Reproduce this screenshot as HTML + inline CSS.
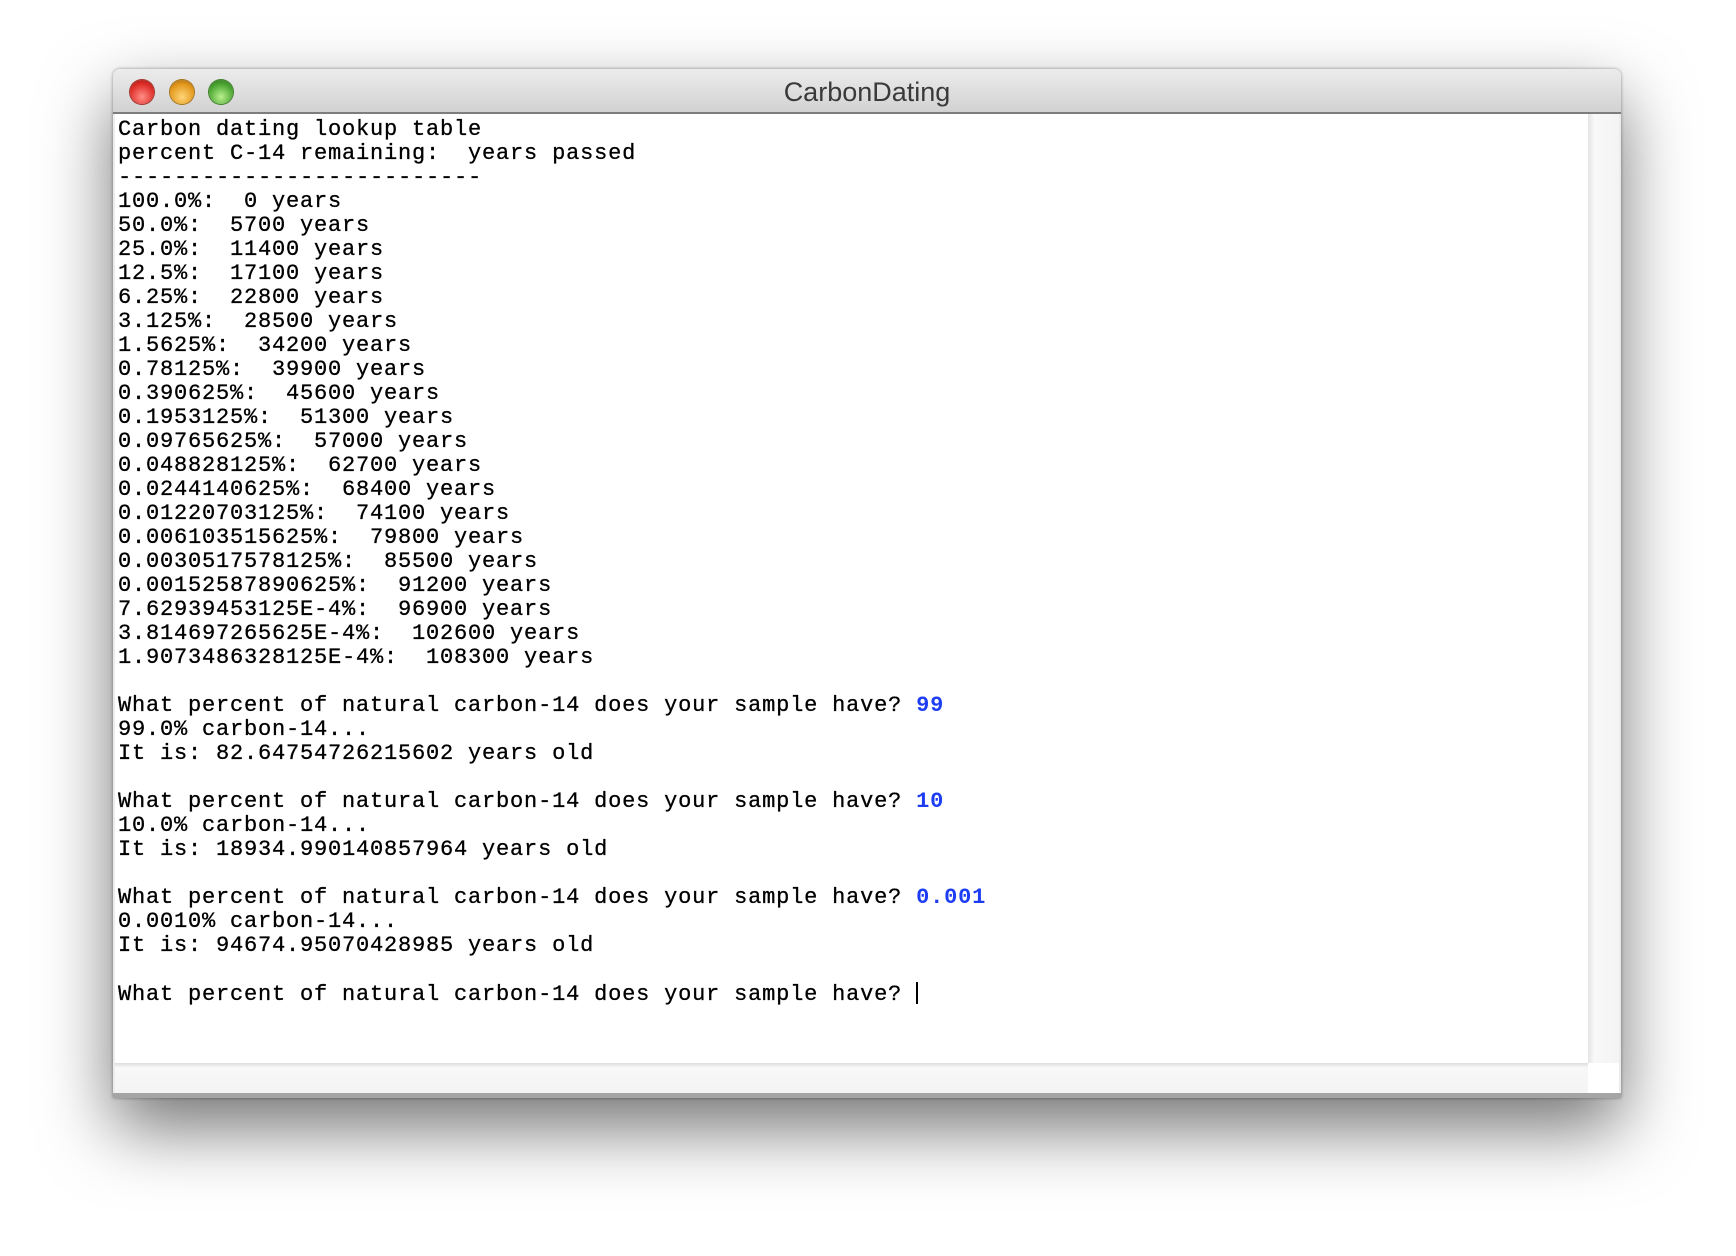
<!DOCTYPE html>
<html><head><style>
html,body{margin:0;padding:0;width:1736px;height:1256px;background:#fff;overflow:hidden}
.win{position:absolute;left:113px;top:69px;width:1508px;height:1029px;background:#ececec;border-radius:7px 7px 0 0;box-shadow:0 30px 70px rgba(0,0,0,0.55),0 0 3px rgba(0,0,0,0.4)}
.title{position:absolute;left:0;top:0;width:100%;height:43px;border-radius:7px 7px 0 0;background:linear-gradient(#ececec,#d2d2d2);border-bottom:2px solid #7d7d7d;text-align:center;font:27px "Liberation Sans",sans-serif;color:#3a3a3a;line-height:47px}
.b{position:absolute;top:11px;width:24px;height:24px;border-radius:50%}
.r{left:17px;background:radial-gradient(circle at 50% 70%,#ff8f87,#e0302a 60%,#9a1510);box-shadow:0 0 0 1px #a0322c}
.y{left:57px;background:radial-gradient(circle at 50% 70%,#ffd57a,#e49a1e 60%,#a06010);box-shadow:0 0 0 1px #a4731d}
.g{left:96px;background:radial-gradient(circle at 50% 70%,#b9f08f,#4ea834 60%,#2b6a18);box-shadow:0 0 0 1px #3f7f2a}
.content{position:absolute;left:2px;top:45px;width:1473px;height:949px;background:#fff}
.vs{position:absolute;left:1475px;top:45px;width:31px;height:949px;background:linear-gradient(90deg,#e4e4e4,#f8f8f8 20%,#f4f4f4)}
.hs{position:absolute;left:2px;top:994px;width:1473px;height:30px;background:linear-gradient(#dcdcdc,#f8f8f8 15%,#f4f4f4);}
.corner{position:absolute;left:1475px;top:994px;width:31px;height:30px;background:#fff}
.bot{position:absolute;left:0;top:1024px;width:1508px;height:5px;background:#a5a5a5}
pre{position:absolute;left:3px;top:4px;margin:0;font:22px/24px "Liberation Mono",monospace;letter-spacing:0.8px;color:#000;-webkit-text-stroke:0.3px #000}
.bl{color:#1d3df5;font-weight:bold;-webkit-text-stroke:0}
.cur{display:inline-block;width:2px;height:22px;background:#000;vertical-align:-4px}
</style></head><body>
<div class="win">
<div class="title">CarbonDating<div class="b r"></div><div class="b y"></div><div class="b g"></div></div>
<div class="content"><pre>Carbon dating lookup table
percent C-14 remaining:  years passed
--------------------------
100.0%:  0 years
50.0%:  5700 years
25.0%:  11400 years
12.5%:  17100 years
6.25%:  22800 years
3.125%:  28500 years
1.5625%:  34200 years
0.78125%:  39900 years
0.390625%:  45600 years
0.1953125%:  51300 years
0.09765625%:  57000 years
0.048828125%:  62700 years
0.0244140625%:  68400 years
0.01220703125%:  74100 years
0.006103515625%:  79800 years
0.0030517578125%:  85500 years
0.00152587890625%:  91200 years
7.62939453125E-4%:  96900 years
3.814697265625E-4%:  102600 years
1.9073486328125E-4%:  108300 years

What percent of natural carbon-14 does your sample have? <span class="bl">99</span>
99.0% carbon-14...
It is: 82.64754726215602 years old

What percent of natural carbon-14 does your sample have? <span class="bl">10</span>
10.0% carbon-14...
It is: 18934.990140857964 years old

What percent of natural carbon-14 does your sample have? <span class="bl">0.001</span>
0.0010% carbon-14...
It is: 94674.95070428985 years old

What percent of natural carbon-14 does your sample have? <span class="cur"></span></pre></div>
<div class="vs"></div><div class="hs"></div><div class="corner"></div><div class="bot"></div>
</div>
</body></html>
